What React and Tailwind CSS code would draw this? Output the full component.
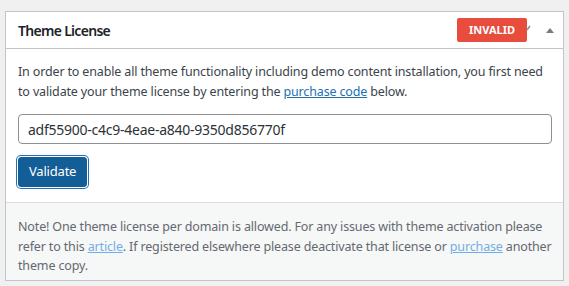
export default function App() {
  const font = { fontFamily: '"Segoe UI", "Noto Sans", sans-serif' };
  return (
    <div className="min-h-[286px] w-[569px] bg-[#f0f0f1] pt-[11px] pl-[5px] pr-[5px]" style={font}>
      <div className="w-[559px] border border-[#c3c4c7] bg-white">
        <div className="flex h-[37px] items-center border-b border-[#c3c4c7] pl-[12px] pr-[8px]">
          <h2 className="flex-1 text-[14px] font-semibold tracking-[-0.7px] text-[#1d2327]">Theme License</h2>
          <div className="flex items-center">
            <span className="flex h-[24px] w-[70px] items-center justify-center rounded-[2px] bg-[#e74c3c] text-[11px] font-bold text-white">INVALID</span>
            <svg width="6" height="8" viewBox="0 0 6 8" className="ml-[-1px] mt-[-4px]">
              <path d="M1 6 L4 2" stroke="#8c8f94" strokeWidth="1.5" />
            </svg>
            <svg width="10" height="8" viewBox="0 0 10 8" className="ml-[13px]">
              <path d="M1 7 L5 2 L9 7 Z" fill="#787c82" />
            </svg>
          </div>
        </div>
        <div className="px-[12px] pt-[13px] pb-[15px]">
          <p className="-mr-[20px] whitespace-nowrap text-[12.5px] leading-[19.5px] tracking-[-0.15px] text-[#3c434a]">
            In order to enable all theme functionality including demo content installation, you first need
            <br />
            to validate your theme license by entering the{' '}
            <a href="#" className="text-[#2271b1] underline">purchase code</a> below.
          </p>
          <input
            readOnly
            value="adf55900-c4c9-4eae-a840-9350d856770f"
            className="mt-[13px] h-[30px] w-[534px] rounded-[4px] border border-[#8c8f94] bg-white px-[9px] text-[14px] tracking-[-0.25px] text-[#2c3338] outline-none"
            style={font}
          />
          <div className="mt-[13px]">
            <button className="h-[30px] rounded-[3px] border border-[#135e96] bg-[#135e96] px-[10px] text-[13px] tracking-[-0.2px] text-white shadow-[0_0_0_1px_#fff,0_0_0_2px_#2271b1]">
              Validate
            </button>
          </div>
        </div>
        <div className="border-t border-[#dcdcde] bg-[#f6f7f7] px-[12px] pt-[14px] pb-[4px]">
          <p className="-mr-[20px] whitespace-nowrap text-[12.5px] leading-[19.5px] tracking-[-0.15px] text-[#646970]">
            Note! One theme license per domain is allowed. For any issues with theme activation please
            <br />
            refer to this <a href="#" className="text-[#72aee6] underline">article</a>. If registered elsewhere please deactivate that license or{' '}
            <a href="#" className="text-[#72aee6] underline">purchase</a> another
            <br />
            theme copy.
          </p>
        </div>
      </div>
    </div>
  );
}
